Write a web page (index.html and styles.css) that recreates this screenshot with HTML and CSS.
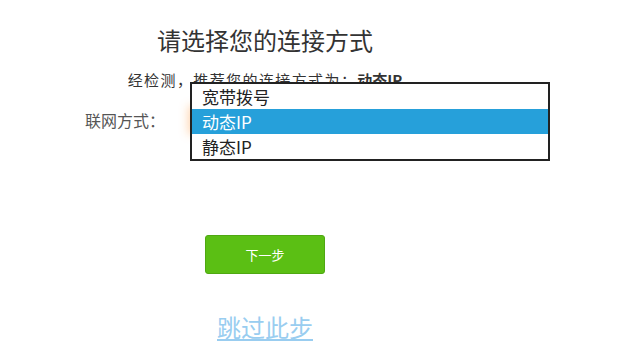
FILE: index.html
```html
<!DOCTYPE html>
<html lang="zh-CN">
<head>
    <meta charset="UTF-8">
    <title>连接方式</title>
    <link rel="stylesheet" href="styles.css">
</head>
<body>
    <div class="wizard">
        <h2 class="wizard-title">请选择您的连接方式</h2>
        <p class="detect-tip">经检测，推荐您的连接方式为：<b>动态IP</b></p>

        <div class="form-row">
            <label class="row-label">联网方式：</label>
            <div class="select-wrap">
                <div class="fake-select"></div>
                <ul class="option-list">
                    <li>宽带拨号</li>
                    <li class="active">动态IP</li>
                    <li>静态IP</li>
                </ul>
            </div>
        </div>

        <button class="btn-next" type="button">下一步</button>
        <a class="skip-link" href="#">跳过此步</a>
    </div>
</body>
</html>
```

FILE: styles.css
```css
body {
    margin: 0;
    background: #fff;
    font-family: "Noto Sans CJK SC", "Noto Sans", sans-serif;
    color: #333;
}

.wizard {
    width: 530px;
    text-align: center;
    padding-top: 24px;
}

.wizard-title {
    margin: 0;
    font-size: 24px;
    line-height: 32px;
    font-weight: normal;
    color: #333;
}

.detect-tip {
    margin: 14px 0 0;
    font-size: 15px;
    letter-spacing: 1.4px;
    line-height: 20px;
    color: #333;
}

.detect-tip b {
    font-weight: bold;
    letter-spacing: 0;
}

.form-row {
    display: flex;
    align-items: center;
    margin-top: 18px;
    padding-left: 85px;
    height: 24px;
}

.row-label {
    width: 105px;
    flex-shrink: 0;
    text-align: left;
    font-size: 16px;
    color: #555;
}

.select-wrap {
    position: relative;
    width: 360px;
    height: 24px;
}

.fake-select {
    height: 24px;
    box-sizing: border-box;
    border: 1px solid #f5a360;
    box-shadow: 0 0 10px 2px rgba(255, 140, 40, 0.35);
}

.option-list {
    position: absolute;
    left: 0;
    top: -26px;
    width: 360px;
    box-sizing: border-box;
    margin: 0;
    padding: 0;
    list-style: none;
    background: #fff;
    border: 2px solid #222;
    text-align: left;
}

.option-list li {
    height: 25px;
    line-height: 25px;
    padding-left: 10px;
    font-size: 17px;
    color: #222;
}

.option-list li.active {
    background: #26a0da;
    color: #fff;
}

.btn-next {
    display: block;
    margin: 103px auto 0;
    width: 120px;
    height: 39px;
    border: 1px solid #4fa812;
    border-radius: 3px;
    background: #5bbf14;
    color: #fff;
    font-family: inherit;
    font-size: 13px;
}

.skip-link {
    display: inline-block;
    margin-top: 38px;
    font-size: 24px;
    line-height: 30px;
    color: #99cdf0;
    text-decoration: underline;
}
```
